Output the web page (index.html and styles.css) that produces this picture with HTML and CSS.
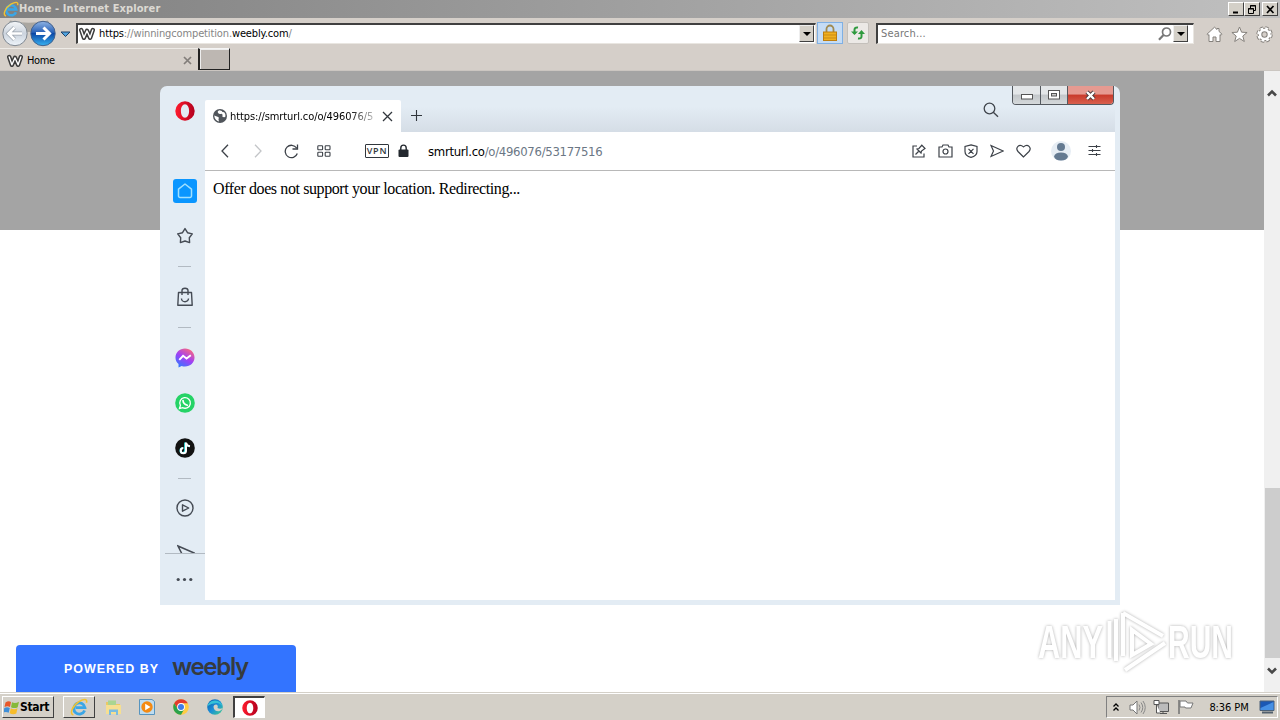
FILE: index.html
```html
<!DOCTYPE html>
<html lang="en">
<head>
<meta charset="utf-8">
<title>Home - Internet Explorer</title>
<link rel="stylesheet" href="styles.css">
</head>
<body>
<svg width="0" height="0" class="defs">
  <defs>
    <linearGradient id="redO" x1="0" x2="1"><stop offset="0" stop-color="#ff1b2d"/><stop offset="1" stop-color="#b3001e"/></linearGradient>
    <linearGradient id="msg" x1="0.2" y1="1" x2="0.8" y2="0"><stop offset="0" stop-color="#2f7bff"/><stop offset=".5" stop-color="#a040f5"/><stop offset="1" stop-color="#ff6a78"/></linearGradient>
    <linearGradient id="fwd" x1="0" y1="0" x2="0" y2="1"><stop offset="0" stop-color="#8fb4e4"/><stop offset=".45" stop-color="#2a62b8"/><stop offset=".5" stop-color="#0c48a6"/><stop offset="1" stop-color="#38b2f2"/></linearGradient>
    <linearGradient id="bck" x1="0" y1="0" x2="0" y2="1"><stop offset="0" stop-color="#f4f6f8"/><stop offset=".5" stop-color="#ccd4de"/><stop offset="1" stop-color="#eef4fa"/></linearGradient>
    <linearGradient id="edge" x1="0" y1="0" x2="1" y2="1"><stop offset="0" stop-color="#0c59a4"/><stop offset=".5" stop-color="#1b8fd8"/><stop offset="1" stop-color="#42d08a"/></linearGradient>
    <symbol id="ie" viewBox="0 0 16 16">
      <path d="M13 11.200A5 5 0 1 1 13.300 8.600H5" fill="none" stroke="#3aa6e6" stroke-width="2.500"/>
      <path d="M3 15C-1 14 2.500 6.500 8 3.200 12.500.5 15.800.6 14.600 4.300" fill="none" stroke="#f2c230" stroke-width="1.400"/>
    </symbol>
    <symbol id="w" viewBox="0 0 16 14">
      <path d="M2.200 3L4.900 10.800 8 3.800 11.100 10.800 13.800 3" fill="none" stroke="#3c3c3c" stroke-width="4.400" stroke-linejoin="round" stroke-linecap="round"/>
      <path d="M2.200 3L4.900 10.800 8 3.800 11.100 10.800 13.800 3" fill="none" stroke="#fff" stroke-width="1.400" stroke-linejoin="round" stroke-linecap="round"/>
    </symbol>
    <symbol id="opera" viewBox="0 0 20 20">
      <path fill="url(#redO)" fill-rule="evenodd" d="M10 .3a9.700 9.700 0 1 0 0 19.400A9.700 9.700 0 1 0 10 .3ZM10 3.300c2.500 0 4.100 3 4.100 6.700S12.500 16.700 10 16.700 5.900 13.700 5.900 10 7.500 3.300 10 3.300Z"/>
    </symbol>
  </defs>
</svg>

<header class="ie-chrome">
  <div class="titlebar">
    <svg class="title-icon" width="16" height="16"><use href="#ie"/></svg>
    <span class="title-text">Home - Internet Explorer</span>
    <div class="title-buttons">
      <span class="classic-btn"><svg width="13" height="11"><path d="M3 8.500h5" stroke="#000" stroke-width="2"/></svg></span>
      <span class="classic-btn"><svg width="13" height="11" fill="none" stroke="#000"><path d="M4.500 4V1.500h5v5H8M4 2h6M2.500 4.500h5v5h-5zM2 5h6"/></svg></span>
      <span class="classic-btn close"><svg width="13" height="11"><path d="M3 2l6.500 7M9.500 2L3 9" stroke="#000" stroke-width="1.700"/></svg></span>
    </div>
  </div>
  <div class="navbar">
    <svg class="nav-arrows" width="74" height="30" viewBox="0 0 74 30">
      <path d="M10 2.500Q29 7 48 2.500L54 14H4Z" fill="#aaa6a0"/>
      <circle cx="15" cy="15.500" r="12.200" fill="url(#bck)" stroke="#7f8790"/>
      <path d="M22 15.500H9M14.500 9.500l-6 6 6 6" fill="none" stroke="#9ba3ad" stroke-width="4"/>
      <path d="M22 15.500H9M14.500 9.500l-6 6 6 6" fill="none" stroke="#fff" stroke-width="2.600"/>
      <circle cx="43" cy="15.500" r="12.200" fill="url(#fwd)" stroke="#44618c"/>
      <path d="M36 15.500H49M43.500 9.500l6 6-6 6" fill="none" stroke="#fff" stroke-width="3"/>
      <path d="M61 14h9l-4.500 4.500z" fill="#4fa3df" stroke="#1d3f66"/>
    </svg>
    <div class="address">
      <svg width="16" height="14"><use href="#w"/></svg>
      <span class="address-url"><b>https</b>://winningcompetition.<b>weebly.com</b>/</span>
      <span class="drop"></span>
    </div>
    <span class="lock-btn"><svg width="14" height="18" viewBox="0 0 14 18"><path d="M3.500 9V5a3.500 3.500 0 0 1 7 0v4" fill="none" stroke="#a08a50" stroke-width="1.800"/><rect x=".5" y="8" width="13" height="8.500" fill="#f0b020" stroke="#bd7e10"/><path d="M1 11h12M1 14h12" stroke="#c98b16"/></svg></span>
    <span class="refresh-btn"><svg width="16" height="14" viewBox="0 0 16 14"><path d="M4.500 8V3.500M8 1.500Q4.500 1 4.500 4M11.500 6v4.500M8 12.500q3.500.5 3.500-2" stroke="#2f9a3e" stroke-width="2" fill="none"/><path d="M1 5.500h7L4.500 9zM8 8h7l-3.500-4z" fill="#2f9a3e"/></svg></span>
    <div class="search">
      <span class="search-label">Search...</span>
      <svg width="14" height="14" viewBox="0 0 14 14"><circle cx="8.500" cy="5" r="4" fill="none" stroke="#777" stroke-width="1.700"/><path d="M5.500 8L1 12.700" stroke="#777" stroke-width="2.200"/></svg>
      <span class="drop"></span>
    </div>
    <div class="nav-tools">
      <svg width="17" height="17" viewBox="0 0 17 17"><path d="M8.500 1.200L1 8.200l1 1.200 1-.8V15.500h4v-4.500h3v4.500h4V8.600l1 .8 1-1.200-3-2.800V2.500h-2v1z" fill="#fff" stroke="#85817c"/></svg>
      <svg width="17" height="17" viewBox="0 0 17 17"><path d="M8.500 1l2.100 5.200 5.500.3-4.300 3.500 1.500 5.500-4.800-3.100-4.800 3.100 1.500-5.500L.9 6.500l5.500-.3z" fill="#fff" stroke="#85817c"/></svg>
      <svg width="17" height="17" viewBox="0 0 17 17"><circle cx="8.500" cy="8.500" r="6.500" fill="none" stroke="#85817c" stroke-width="3.400" stroke-dasharray="3.100 2"/><circle cx="8.500" cy="8.500" r="4.500" fill="none" stroke="#85817c" stroke-width="4.600"/><circle cx="8.500" cy="8.500" r="6" fill="none" stroke="#fff" stroke-width="2.500" stroke-dasharray="2.700 2.010"/><circle cx="8.500" cy="8.500" r="4.500" fill="none" stroke="#fff" stroke-width="2.600"/></svg>
    </div>
  </div>
  <div class="tabs">
    <div class="ie-tab">
      <svg width="16" height="14"><use href="#w"/></svg>
      <span class="ie-tab-label">Home</span>
      <svg width="9" height="9"><path d="M1 1l7 7M8 1L1 8" stroke="#827e7a" stroke-width="1.700"/></svg>
    </div>
    <span class="new-tab"></span>
  </div>
</header>

<main class="viewport">
  <div class="page">
    <div class="hero"></div>
    <div class="powered"><span class="powered-by">POWERED BY</span><span class="weebly">weebly</span></div>
  </div>
  <div class="scrollbar">
    <svg width="16" height="40"><path d="M4 24.500l4-4 4 4" fill="none" stroke="#484848" stroke-width="2.600"/></svg>
    <div class="thumb"></div>
    <svg width="16" height="34"><path d="M4 10.500l4 4 4-4" fill="none" stroke="#484848" stroke-width="2.600"/></svg>
  </div>
</main>

<section class="opera-window">
  <aside class="sidebar">
    <span class="slot logo"><svg width="20" height="20"><use href="#opera"/></svg></span>
    <span class="slot home"><span class="home-tile"><svg width="18" height="18" viewBox="0 0 18 18"><path d="M2.500 7.200L9 2l6.500 5.200V14a1.500 1.500 0 0 1-1.500 1.500H4A1.500 1.500 0 0 1 2.500 14z" fill="none" stroke="#9fe0ff" stroke-width="1.500" stroke-linejoin="round"/></svg></span></span>
    <span class="slot star"><svg width="18" height="18" viewBox="0 0 18 18"><path d="M9 1.600l2.500 4.100 4.800 1.200-3 3.800.3 4.900L9 14l-4.600 1.600.3-4.900-3-3.800 4.800-1.200z" fill="none" stroke="#454b54" stroke-width="1.400" stroke-linejoin="round"/></svg></span>
    <span class="slot sep1"><i class="sep"></i></span>
    <span class="slot bag"><svg width="18" height="20" viewBox="0 0 18 20" fill="none" stroke="#454b54" stroke-width="1.400"><path d="M2.500 5.500h13L16.200 18.300H1.800z" stroke-linejoin="round"/><path d="M6 8V3.500Q6 1.200 9 1.200t3 2.300V8M5.500 11.500a3.500 3.300 0 0 0 7 0"/></svg></span>
    <span class="slot sep2"><i class="sep"></i></span>
    <span class="slot messenger"><svg width="20" height="20" viewBox="0 0 21 21"><path d="M10.500.5C4.900.5.500 4.500.500 10c0 2.900 1.200 5.200 3.200 6.900V20.500l3.300-1.600c1.100.4 2.300.5 3.500.5 5.600 0 10-4 10-9.400S16.100.5 10.500.5Z" fill="url(#msg)"/><path d="M4.500 12.500L8.500 8.200l3.600 2.800 4.500-3.500" fill="none" stroke="#fff" stroke-width="2"/></svg></span>
    <span class="slot whatsapp"><svg width="20" height="20" viewBox="0 0 20 20"><circle cx="10" cy="10" r="9.800" fill="#25d366"/><path d="M4.500 15.500l.9-3.100A5.300 5.300 0 1 1 7.600 14.600z" fill="none" stroke="#fff" stroke-width="1.300"/><path d="M8 7.500q.2 3.600 4.300 4.700" fill="none" stroke="#fff" stroke-width="1.700" stroke-linecap="round"/></svg></span>
    <span class="slot tiktok"><svg width="20" height="20" viewBox="0 0 20 20"><circle cx="10" cy="10" r="9.800" fill="#121212"/><path d="M10 4.500v8.100a2.300 2.300 0 1 1-2.300-2.400M10.200 5q.8 3 3.600 3.200" fill="none" stroke="#35e0df" stroke-width="1.800"/><path d="M11 4.400v8.300a2.600 2.600 0 1 1-2.600-2.600M11 4.600q.6 3.200 4 3.600" fill="none" stroke="#fff" stroke-width="2"/></svg></span>
    <span class="slot sep3"><i class="sep"></i></span>
    <span class="slot player"><svg width="18" height="18" viewBox="0 0 18 18" fill="none" stroke="#454b54" stroke-width="1.400"><circle cx="9" cy="9" r="8"/><path d="M6.500 5.800v6.400L12.700 9z" stroke-linejoin="round"/></svg></span>
    <span class="slot flow"><svg width="18" height="18" viewBox="0 0 18 18"><path d="M1 2L17 9 1.500 16 4.500 9z" fill="none" stroke="#454b54" stroke-width="1.500"/></svg></span>
    <span class="slot more"><svg width="17" height="5"><circle cx="2.200" cy="2.500" r="1.600" fill="#454b54"/><circle cx="8.500" cy="2.500" r="1.600" fill="#454b54"/><circle cx="14.800" cy="2.500" r="1.600" fill="#454b54"/></svg></span>
  </aside>
  <div class="opera-main">
    <div class="tabstrip">
      <div class="opera-tab">
        <svg width="14" height="14" viewBox="0 0 14 14"><circle cx="7" cy="7" r="7" fill="#50555b"/><path d="M6.500 1.300Q4 2 5 3.800t3.500 1q1.500.4 1 2-1 .7.800 1.200 1.500.7 2.200-.7.300-2.600-1.500-4.300Q9 3.500 8.800 2zM1.200 6.500l4 1.500q1.500 1 .2 2.100l.6 2.400Q1.800 11.500 1.200 6.500z" fill="#fff"/></svg>
        <span class="opera-tab-label">https://smrturl.co/o/496076/5</span>
        <svg width="11" height="11"><path d="M1 1l9 9M10 1l-9 9" stroke="#31363c" stroke-width="1.300"/></svg>
      </div>
      <svg class="plus" width="11" height="11"><path d="M5.500 0v11M0 5.500h11" stroke="#31363c" stroke-width="1.100"/></svg>
      <svg class="tab-search" width="16" height="16" viewBox="0 0 16 16"><circle cx="6.500" cy="6.500" r="5.300" fill="none" stroke="#41464d" stroke-width="1.300"/><path d="M10.300 10.300l4.700 4.500" stroke="#41464d" stroke-width="1.400"/></svg>
    </div>
    <div class="toolbar">
      <span class="tool"><svg width="14" height="14"><path d="M10 .8L4 7l6 6.200" fill="none" stroke="#3c4148" stroke-width="1.300"/></svg></span>
      <span class="tool"><svg width="14" height="14"><path d="M4 .8L10 7l-6 6.200" fill="none" stroke="#c3c5c8" stroke-width="1.300"/></svg></span>
      <span class="tool"><svg width="15" height="15"><path d="M13.300 9.500A6.200 6.200 0 1 1 12.600 4M13.500.5V5h-5" fill="none" stroke="#3c4148" stroke-width="1.300"/></svg></span>
      <span class="tool"><svg width="14" height="12" fill="none" stroke="#3c4148" stroke-width="1.100"><rect x=".8" y=".7" width="4.800" height="4" rx=".7"/><rect x="8.200" y=".7" width="4.800" height="4" rx=".7"/><rect x=".8" y="7.200" width="4.800" height="4" rx=".7"/><rect x="8.200" y="7.200" width="4.800" height="4" rx=".7"/></svg></span>
      <span class="vpn">VPN</span>
      <svg class="padlock" width="11" height="14"><path d="M2.800 6V4a2.600 2.800 0 0 1 5.400 0v2" fill="none" stroke="#23282e" stroke-width="1.400"/><rect x=".5" y="5.500" width="10" height="7.500" rx="1" fill="#23282e"/></svg>
      <span class="opera-url"><b>smrturl.co</b>/o/496076/53177516</span>
      <span class="tool sm"><svg width="14" height="14" viewBox="0 0 14 14" fill="none" stroke="#3c4148" stroke-width="1.200"><path d="M5 2H1v11h11V9.500M3.500 10.500l3-3M5 5l4 4 .5-2L13 4.500 9.800 1.200 7 4.500z"/></svg></span>
      <span class="tool sm"><svg width="15" height="14" viewBox="0 0 15 14" fill="none" stroke="#3c4148" stroke-width="1.200"><path d="M1 3h3l1-2h5l1 2h3v10H1z"/><circle cx="7.500" cy="7.500" r="2.500"/></svg></span>
      <span class="tool sm"><svg width="14" height="14" viewBox="0 0 14 14" fill="none" stroke="#3c4148" stroke-width="1.200"><path d="M7 .8l6 1.700v5Q13 12 7 13.400 1 12 1 7.500v-5zM4.500 4.800l5 5M9.500 4.800l-5 5"/></svg></span>
      <span class="tool sm"><svg width="14" height="14" viewBox="0 0 14 14" fill="none" stroke="#3c4148" stroke-width="1.200"><path d="M1 1.500L13.200 7 1 12.500 3.500 7z"/></svg></span>
      <span class="tool sm"><svg width="15" height="14" viewBox="0 0 15 14" fill="none" stroke="#3c4148" stroke-width="1.200"><path d="M7.500 13L2 7.500C-1 4 3 -1 7.500 2.900 12 -1 16 4 13 7.500z"/></svg></span>
      <span class="tool avatar"><svg width="20" height="20" viewBox="0 0 20 20"><circle cx="10" cy="10" r="10" fill="#e6edf4"/><circle cx="10" cy="6" r="4" fill="#647a91"/><path d="M3 15.500Q4 11.500 10 11.500t7 4Q16 19.500 10 19.500t-7-4z" fill="#647a91"/></svg></span>
      <span class="tool menu"><svg width="13" height="12" stroke="#3c4148" stroke-width="1.100"><path d="M.5 1.500h12M.5 5.500h12M.5 9.500h12M8.500 0v3M4.500 4v3M8.500 8v3"/></svg></span>
    </div>
    <div class="opera-page">Offer does not support your location. Redirecting...</div>
  </div>
  <div class="aero-buttons">
    <span class="aero"><svg width="13" height="6"><rect x="1.500" y=".5" width="11" height="4.500" fill="#fff" stroke="#555"/></svg></span>
    <span class="aero max"><svg width="12" height="10" fill="#fff" stroke="#555"><rect x=".5" y=".5" width="11" height="8.500"/><rect x="3.500" y="3.500" width="5" height="2.500" fill="#ccc"/></svg></span>
    <span class="aero aero-close"><svg width="15" height="11"><path d="M4 2l7 7M11 2L4 9" stroke="#4b3a3c" stroke-width="4.200"/><path d="M4 2l7 7M11 2L4 9" stroke="#fff" stroke-width="2.400"/></svg></span>
  </div>
</section>

<svg class="watermark" width="230" height="70" viewBox="0 0 230 70">
  <g class="mark">
    <text x="8" y="52" textLength="65" lengthAdjust="spacingAndGlyphs">ANY</text>
    <text x="138" y="52" textLength="65" lengthAdjust="spacingAndGlyphs">RUN</text>
    <path d="M79.500 15v37M86 13v42M93 7L133 30M95 64L135 37M93 7V50M102 24v25l19-11z" fill="none" stroke="#fff" stroke-width="4"/>
  </g>
</svg>

<footer class="taskbar">
  <div class="start">
    <svg width="16" height="15" viewBox="0 0 16 15"><path d="M1.500 2.500Q4.500.5 7 2L6 7Q3.500 5.500.500 7z" fill="#e8582a"/><path d="M8 2.300Q11 4 15 1.800L13.700 7.200Q10.500 9 7 7.200z" fill="#86b93a"/><path d="M.300 8Q3 6.700 5.800 8L4.700 12.700Q2 11.300-.500 12.500z" fill="#3f8fd8"/><path d="M6.800 8.300Q10 10 13.500 8.300L12.300 13.500Q9 15 5.700 13.200z" fill="#f7bd2a"/></svg>
    <span>Start</span>
  </div>
  <span class="task raised"><svg width="18" height="18"><use href="#ie"/></svg></span>
  <span class="task"><svg width="17" height="17" viewBox="0 0 17 17"><path d="M1 3h6l1 2h7v9H1z" fill="#ebc964"/><path d="M3 1.500h8v5H3z" fill="#a9d591"/><path d="M1 6h15v9H1z" fill="#f6df91"/><path d="M4 16V10.500h9V16h-2v-3H6v3z" fill="#7bbce0"/></svg></span>
  <span class="task"><svg width="16" height="16" viewBox="0 0 16 16"><path d="M.5.500h12.500l2.500 2v13H.500z" fill="#bedcf0" stroke="#5794bf"/><circle cx="8" cy="8" r="5.700" fill="#f48a13"/><path d="M6.200 4.800v6.400L11.500 8z" fill="#fff"/></svg></span>
  <span class="task"><svg width="16" height="16" viewBox="0 0 16 16"><circle cx="8" cy="8" r="7.800" fill="#fc4"/><path d="M1.200 4.200A7.800 7.800 0 0 1 14.800 4.200H8L4.700 10z" fill="#e33b2e"/><path d="M1.200 4.200A7.800 7.800 0 0 0 8 15.800L11.300 10H4.700z" fill="#2ba24c"/><circle cx="8" cy="8" r="3.900" fill="#fff"/><circle cx="8" cy="8" r="3" fill="#3f7de8"/></svg></span>
  <span class="task"><svg width="16" height="16" viewBox="0 0 16 16"><circle cx="8" cy="8" r="7.800" fill="url(#edge)"/><path d="M6.500 8q0-2.500 2.700-2.500Q11.500 6 10.500 9q2.500 1.500 5.300 0-1 2.500-3.700 3.200Q7 12.500 6.500 8z" fill="#d4d0c8"/><path d="M.300 8Q1 2 8 1.500q6 .5 7.700 6Q12 2.500 7 4.500 1.500 5.500.300 8z" fill="#35c1d8"/></svg></span>
  <span class="task active"><svg width="16" height="16"><use href="#opera"/></svg></span>
  <div class="tray">
    <svg width="8" height="11"><path d="M1.500 4.500L4 2l2.500 2.500M1.500 8.500L4 6l2.500 2.500" fill="none" stroke="#000" stroke-width="1.300"/></svg>
    <svg class="t-sound" width="17" height="15" viewBox="0 0 17 15"><path d="M1 5h3l4-4v13l-4-4H1z" fill="#fff" stroke="#777"/><path d="M10 4.500q2 3 0 6M12 2.500q3.500 5 0 10M14 1q4.500 6.500 0 13" fill="none" stroke="#888"/></svg>
    <svg class="t-net" width="17" height="16" viewBox="0 0 17 16"><path d="M5 4h10.500v8.500H5z" fill="#bbb" stroke="#555"/><path d="M1 1.500h5v4H1zM3.500 5.500V14h4M7 14.500h7M10 12.500v2" fill="#fff" stroke="#555"/></svg>
    <svg class="t-flag" width="17" height="16" viewBox="0 0 17 16"><path d="M2 1v14" stroke="#777" stroke-width="1.600"/><path d="M3 2h6l1.500 2H16l-2 5H8.500L8 8H3z" fill="#fff" stroke="#777"/></svg>
    <span class="clock">8:36 PM</span>
    <svg width="16" height="14" viewBox="0 0 16 14"><path d="M1 1h14v9.500H1z" fill="#1b58b4" stroke="#4c6178"/><path d="M1.500 8L14.500 2v8h-13z" fill="#4690e4"/><path d="M3 12.500h11" stroke="#53606d" stroke-width="2"/></svg>
  </div>
</footer>
</body>
</html>
```
FILE: styles.css
```css
* { box-sizing: border-box; }
body {
  margin: 0;
  width: 1280px;
  height: 720px;
  overflow: hidden;
  display: flex;
  flex-direction: column;
  background: #fff;
  color: #000;
  font: 11px "DejaVu Sans Condensed", "DejaVu Sans", sans-serif;
  font-stretch: condensed;
  white-space: nowrap;
}
svg { display: block; flex: none; }
b { font-weight: normal; color: #000; }
.defs { position: absolute; }

.ie-chrome { height: 71px; flex: none; background: #d5cfc9; border-bottom: 1px solid #cbc6c1; }
.titlebar {
  height: 18px;
  display: flex;
  align-items: center;
  padding: 0 2px 0 3px;
  background: linear-gradient(90deg, #808080, #c0c0c0);
}
.title-text { color: #dcd9d3; font-weight: bold; font-size: 11px; letter-spacing: .1px; margin: -2px 0 0; }
.title-buttons { display: flex; margin-left: auto; }
.classic-btn {
  width: 16px; height: 14px;
  display: flex; align-items: center; justify-content: center;
  background: #d4d0c8;
  border: 1px solid;
  border-color: #fff #404040 #404040 #fff;
}
.classic-btn.close { margin-left: 2px; }

.navbar { height: 30px; display: flex; align-items: center; }
.nav-arrows { margin-right: 2px; }
.address, .search {
  height: 21px;
  display: flex;
  align-items: center;
  background: #fff;
  border: 1px solid;
  border-color: #404040 #e9e6e1 #e9e6e1 #404040;
  border-width: 2px 1px 1px 2px;
}
.address { width: 740px; padding: 0 1px; }
.address-url { margin-left: 4px; color: #858585; flex: 1; letter-spacing: -.130px; }
.drop {
  width: 15px; height: 17px;
  background: #d4d0c8;
  border: 1px solid;
  border-color: #eee #404040 #404040 #eee;
  display: flex; align-items: center; justify-content: center;
}
.drop::after { content: ""; border: 4px solid transparent; border-top-color: #000; border-bottom: 0; }
.lock-btn, .refresh-btn { height: 22px; display: flex; align-items: center; justify-content: center; }
.lock-btn { width: 26px; margin-left: 1px; background: #c5dcf5; border: 1px solid #7fb0e4; }
.refresh-btn { width: 22px; margin: 0 7px 0 4px; background: #ece9e6; border: 1px solid #c4c0bb; border-radius: 2px; }
.search { width: 318px; padding: 0 5px 0 3px; }
.search-label { color: #777; flex: 1; letter-spacing: .150px; }
.search .drop { margin-left: 1px; }
.nav-tools { display: flex; gap: 8px; margin: 3px 0 0 12px; }

.tabs { height: 22px; display: flex; }
.ie-tab { width: 198px; height: 22px; padding: 2px 6px 0 7px; display: flex; align-items: center; border-top: 1px solid #eeebe7; }
.ie-tab-label { margin-left: 4px; flex: 1; letter-spacing: -.4px; }
.new-tab { width: 32px; height: 22px; background: #bdb7b2; border: 1px solid #222; border-left-width: 2px; border-top-color: #f5f5f5; box-shadow: inset 1px 1px #eee; }

.viewport { flex: 1; display: flex; min-height: 0; }
.page { flex: 1; display: flex; flex-direction: column; }
.hero { height: 159px; background: #a4a4a4; }
.powered {
  width: 280px; height: 47px;
  margin: auto 0 0 16px;
  display: flex; align-items: center;
  padding-left: 48px;
  background: #3374ff;
  border-radius: 4px 4px 0 0;
  color: #fff;
}
.powered-by { width: 97px; font: bold 12.500px "Liberation Sans", sans-serif; letter-spacing: .950px; }
.weebly { margin: -4px 0 0 11px; font: 600 24px Inter, sans-serif; letter-spacing: -1.300px; color: #363b3e; }
.scrollbar { width: 16px; background: #f0f0f0; display: flex; flex-direction: column; }
.thumb { height: 170px; margin: auto 0 0 1px; background: #cdcdcd; }

.opera-window {
  position: absolute;
  left: 160px; top: 86px;
  width: 960px; height: 519px;
  display: flex;
  padding: 0 5px 5px 0;
  background: #e3ecf4;
  border-radius: 7px 7px 0 0;
}
.sidebar { width: 45px; padding: 0 1px 0 5px; display: flex; flex-direction: column; }
.slot { display: flex; align-items: center; justify-content: center; flex: none; }
.slot > svg, .home-tile { margin-left: 1px; }
.slot.messenger > svg, .slot.player > svg, .slot.more > svg { margin-left: 0; }
.logo { height: 50px; margin-bottom: 32px; }
.home { height: 46px; }
.home-tile { width: 24px; height: 24px; border-radius: 3px; background: #0a96ff; display: flex; align-items: center; justify-content: center; }
.star { height: 44px; }
.sep1 { height: 16px; }
.bag { height: 46px; }
.sep2 { height: 14px; }
.messenger { height: 48px; }
.whatsapp { height: 41px; }
.tiktok { height: 49px; }
.sep3 { height: 12px; }
.sep { width: 13px; height: 1px; background: #b2bac2; }
.player { height: 48px; }
.flow { height: 22px; margin-right: -1px; align-items: flex-start; padding-top: 12px; overflow: hidden; border-bottom: 1px solid #b2bac2; }
.more { height: 51px; }
.opera-main { flex: 1; display: flex; flex-direction: column; min-width: 0; }
.tabstrip { height: 46px; display: flex; align-items: flex-end; background: linear-gradient(#e3ecf4 45%, #d5dde6); }
.opera-tab { width: 196px; height: 32px; display: flex; align-items: center; padding: 0 8px; background: #fff; border-radius: 2px 2px 0 0; }
.opera-tab-label {
  width: 144px; margin: 0 8px 0 3px; flex: 1; overflow: hidden;
  letter-spacing: -.1px;
  -webkit-mask-image: linear-gradient(90deg, #000 82%, rgba(0, 0, 0, .25));
  mask-image: linear-gradient(90deg, #000 82%, rgba(0, 0, 0, .25));
}
.plus { margin: 0 0 11px 10px; }
.tab-search { margin: 0 116px 14px auto; }
.toolbar { height: 39px; display: flex; align-items: center; background: #fff; border-bottom: 1px solid #b8b8b8; padding: 0 13px 0 3.500px; }
.tool { width: 33px; display: flex; justify-content: center; flex: none; }
.tool.sm { width: 26px; }
.tool.avatar { width: 50px; }
.tool.menu { width: 16px; }
.vpn { width: 24px; height: 14px; margin-left: 24.500px; border: 1px solid #30363c; border-radius: 1px; font: 600 9px/12px "Open Sans", sans-serif; letter-spacing: .8px; text-align: center; color: #30363c; }
.padlock { margin-left: 9px; }
.opera-url { margin-left: 19px; flex: 1; font-size: 13px; letter-spacing: -.3px; color: #6b7785; }
.opera-page { flex: 1; background: #fff; padding: 9px 8px; font: 16px "Liberation Serif", serif; letter-spacing: -.4px; }
.aero-buttons {
  position: absolute;
  right: 6px; top: 0;
  width: 102px; height: 19px;
  display: flex;
  border: 1px solid #54595f;
  border-top: 0;
  border-radius: 0 0 4px 4px;
  overflow: hidden;
}
.aero { width: 28px; display: flex; align-items: center; justify-content: center; background: linear-gradient(#e3e6e8 45%, #c2c6c9 50%, #d5d9db); border-right: 1px solid #54595f; }
.aero:first-child { padding-top: 3px; }
.aero.max { width: 27px; }
.aero.aero-close { flex: 1; border: 0; background: linear-gradient(#e69a91 45%, #c93a2b 50%, #d8604e); }

.watermark { position: absolute; left: 1030px; top: 606px; }
.mark { fill: #fff; font: bold 46px "Liberation Sans", sans-serif; filter: drop-shadow(0 0 1.500px rgba(0, 0, 0, .32)); }

.taskbar { height: 28px; flex: none; display: flex; align-items: center; padding: 1px 2px 0; background: #d4d0c8; border-top: 1px solid #d4d0c8; box-shadow: inset 0 1px #fff; }
.start {
  width: 52px; height: 22px; margin-right: 9px;
  display: flex; align-items: center; gap: 0; padding-left: 1px;
  font-weight: bold; font-size: 12px; letter-spacing: -.3px;
  border: 1px solid; border-color: #fff #404040 #404040 #fff;
}
.task { width: 34px; height: 22px; display: flex; align-items: center; justify-content: center; }
.raised, .active { width: 32px; border: 1px solid; }
.raised { border-color: #fff #404040 #404040 #fff; margin-right: 1px; }
.active { background: #fff; border-color: #404040 #fff #fff #404040; border-width: 2px 1px 1px 2px; margin-left: 1px; }
.tray { width: 172px; height: 22px; margin-left: auto; padding: 0 2px 0 5px; display: flex; align-items: center; border: 1px solid; border-color: #808080 #fff #fff #808080; }
.t-sound { margin-left: 9px; }
.t-net, .t-flag { margin-left: 7px; }
.clock { margin: 0 auto; padding-left: 5px; letter-spacing: -.1px; }
```
